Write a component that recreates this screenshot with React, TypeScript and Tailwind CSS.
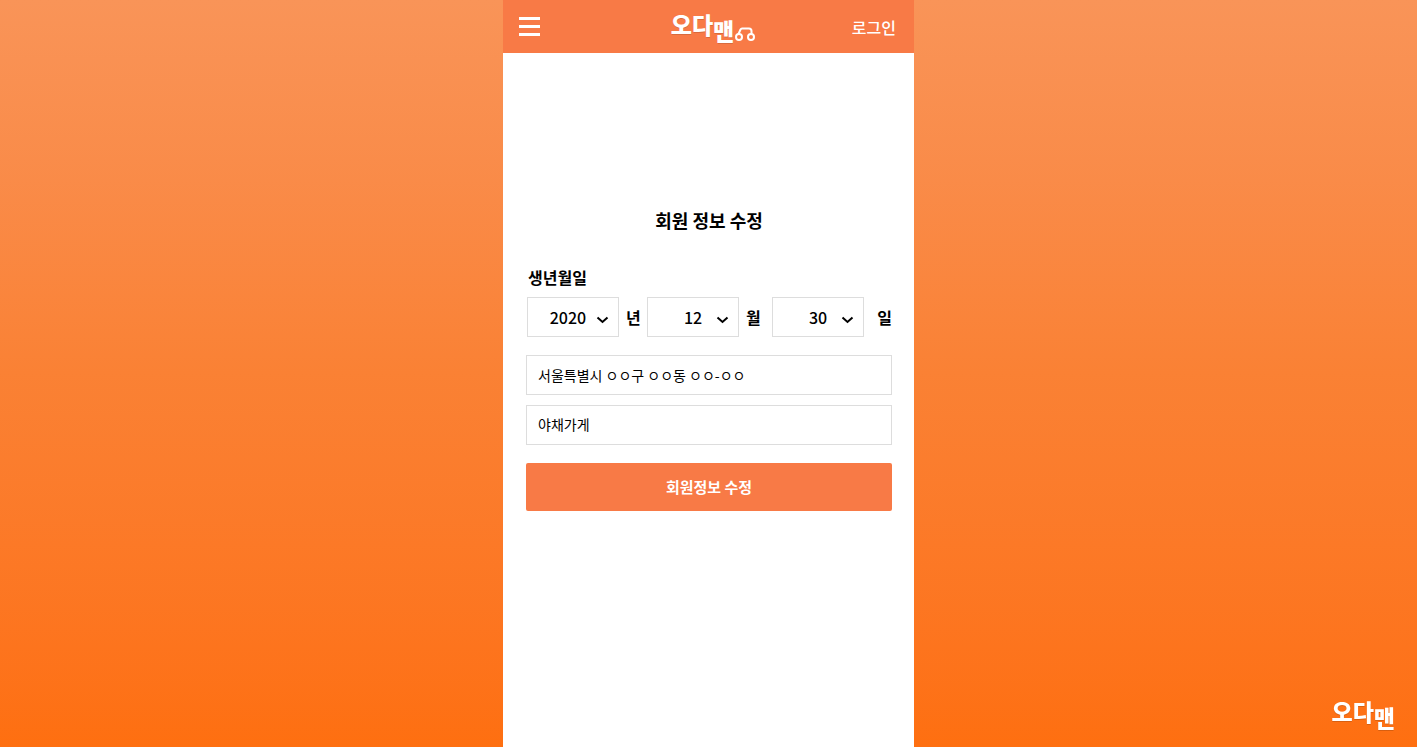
import { useState } from "react";
import clsx from "clsx";

const range = (from: number, to: number) =>
  Array.from({ length: to - from + 1 }, (_, i) => String(from + i));

const YEARS = range(1930, 2020).reverse();
const MONTHS = range(1, 12);
const DAYS = range(1, 31);

function Wordmark() {
  return (
    <span className="flex text-[23px] leading-[22px] font-black text-white text-shadow-2xs">
      오다<span className="relative top-1.5">맨</span>
    </span>
  );
}

function Wheels() {
  return (
    <svg
      className="self-end"
      width="22"
      height="16"
      viewBox="0 0 22 16"
      fill="none"
      stroke="white"
      strokeWidth="2"
      strokeLinecap="round"
      strokeLinejoin="round"
      aria-hidden="true"
    >
      <circle cx="5" cy="12" r="3" />
      <circle cx="17" cy="12" r="3" />
      <path d="M4.5 9L6.5 4.5Q7 3.500 8 3.500H15Q17.500 3.500 17.500 6V9" />
    </svg>
  );
}

function Header() {
  return (
    <header className="grid h-[53px] grid-cols-3 items-center bg-[#f87a46] px-4">
      <button type="button" aria-label="메뉴" className="flex w-[21px] cursor-pointer flex-col gap-[5px]">
        <span className="h-[3px] bg-white" />
        <span className="h-[3px] bg-white" />
        <span className="h-[3px] bg-white" />
      </button>
      <a href="#" className="flex h-7 items-start justify-self-center pl-2.5">
        <Wordmark />
        <Wheels />
      </a>
      <a href="#" className="justify-self-end pr-0.5 text-base font-medium text-white">
        로그인
      </a>
    </header>
  );
}

interface DateSelectProps {
  id: string;
  unit: string;
  options: string[];
  initial: string;
  className?: string;
}

function DateSelect({ id, unit, options, initial, className }: DateSelectProps) {
  const [value, setValue] = useState(initial);

  return (
    <div className="flex items-center last:justify-between">
      <div className="relative">
        <select
          id={id}
          value={value}
          onChange={(e) => setValue(e.target.value)}
          className={clsx(
            "h-10 w-[92px] cursor-pointer appearance-none border border-[#dddddd] bg-white text-center text-base font-medium text-black [text-align-last:center]",
            className
          )}
        >
          {options.map((option) => (
            <option key={option}>{option}</option>
          ))}
        </select>
        <svg
          className="pointer-events-none absolute top-[19px] right-[10px]"
          width="13"
          height="8"
          viewBox="0 0 13 8"
          fill="none"
          stroke="black"
          strokeWidth="2"
          aria-hidden="true"
        >
          <path d="M1.5 1.500L6.5 6L11.500 1.500" />
        </svg>
      </div>
      <label htmlFor={id} className="pl-[7px] text-base font-bold">
        {unit}
      </label>
    </div>
  );
}

export default function App() {
  const [address, setAddress] = useState("서울특별시 ㅇㅇ구 ㅇㅇ동 ㅇㅇ-ㅇㅇ");
  const [shop, setShop] = useState("야채가게");

  const inputStyle =
    "h-10 w-full border border-[#dddddd] bg-white px-[11px] text-sm text-black outline-none";

  return (
    <div className="min-h-screen bg-linear-to-b from-[#f99458] via-[#fa8134] to-[#fe6f10] font-['Noto_Sans_CJK_KR',sans-serif] text-black">
      <div className="mx-auto min-h-screen w-full max-w-[411px] bg-white">
        <Header />
        <main className="pt-[153px] pr-[22px] pl-[23px]">
          <h1 className="text-center text-lg leading-7 font-bold">회원 정보 수정</h1>
          <form className="mt-7" onSubmit={(e) => e.preventDefault()}>
            <fieldset>
              <legend className="pl-0.5 text-base leading-[30px] font-bold">생년월일</legend>
              <div className="grid grid-cols-[113px_118px_1fr] gap-x-[7px] pt-[5px] pl-px">
                <DateSelect id="year" unit="년" options={YEARS} initial="2020" className="pr-2.5" />
                <DateSelect id="month" unit="월" options={MONTHS} initial="12" />
                <DateSelect id="day" unit="일" options={DAYS} initial="30" />
              </div>
            </fieldset>
            <div className="mt-[18px] flex flex-col gap-2.5">
              <input
                type="text"
                aria-label="주소"
                value={address}
                onChange={(e) => setAddress(e.target.value)}
                className={inputStyle}
              />
              <input
                type="text"
                aria-label="가게 이름"
                value={shop}
                onChange={(e) => setShop(e.target.value)}
                className={clsx(inputStyle, "pb-0.5")}
              />
            </div>
            <button
              type="submit"
              className="mt-[18px] h-12 w-full cursor-pointer rounded-xs bg-[#f87a46] text-[15px] font-bold text-white"
            >
              회원정보 수정
            </button>
          </form>
        </main>
      </div>
      <div className="fixed right-[22px] bottom-[25px]">
        <Wordmark />
      </div>
    </div>
  );
}
